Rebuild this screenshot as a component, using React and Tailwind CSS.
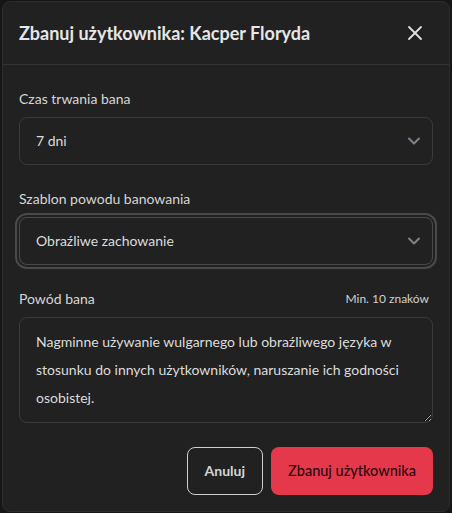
import React from 'react';
import { X, ChevronDown } from 'lucide-react';

const font = { fontFamily: 'Lato, "Noto Sans", sans-serif' };

export default function App() {
    return (
        <div className="min-h-[513px] w-[452px] bg-[#161616] flex items-center justify-center" style={font}>
            <div className="w-[448px] rounded-lg border border-[#2c2c2c] bg-[#212121] text-[#e2e2e2]">
                <div className="flex items-center justify-between border-b border-[#333333] px-4 py-[17px]">
                    <h2 className="text-lg font-bold leading-7 text-[#e6e6e6]">
                        Zbanuj użytkownika: Kacper Floryda
                    </h2>
                    <button className="mr-[6px] text-[#e0e0e0]">
                        <X size={24} strokeWidth={1.8} />
                    </button>
                </div>
                <div className="flex flex-col px-4 pt-6 pb-4">
                    <label className="mb-2 text-sm leading-5 text-[#d6d6d6]">Czas trwania bana</label>
                    <div className="flex h-12 items-center justify-between rounded-lg border border-[#3a3a3a] pl-4 pr-2 text-sm text-[#dcdcdc]">
                        <span>7 dni</span>
                        <ChevronDown size={20} strokeWidth={2.4} className="text-[#7d828c]" />
                    </div>

                    <label className="mt-6 mb-2 text-sm leading-5 text-[#d6d6d6]">Szablon powodu banowania</label>
                    <div className="flex h-12 items-center justify-between rounded-lg border border-[#4a4a4a] pl-4 pr-2 text-sm text-[#dcdcdc] ring-2 ring-[#4a4a4a] ring-offset-2 ring-offset-[#212121]">
                        <span>Obraźliwe zachowanie</span>
                        <ChevronDown size={20} strokeWidth={2.4} className="text-[#7d828c]" />
                    </div>

                    <div className="mt-6 mb-2 flex items-center justify-between">
                        <label className="text-sm leading-5 text-[#d6d6d6]">Powód bana</label>
                        <span className="mr-1 text-xs text-[#d0d0d0]">Min. 10 znaków</span>
                    </div>
                    <textarea
                        rows={3}
                        className="resize-y rounded-lg border border-[#3a3a3a] bg-transparent px-4 py-[10px] text-sm leading-7 text-[#dcdcdc] outline-none"
                        defaultValue="Nagminne używanie wulgarnego lub obraźliwego języka w stosunku do innych użytkowników, naruszanie ich godności osobistej."
                    />

                    <div className="mt-6 flex justify-end gap-2">
                        <button className="h-12 rounded-lg border border-[#cfcfcf] px-[17px] text-sm font-bold text-[#d4d4d4]">
                            Anuluj
                        </button>
                        <button className="h-12 rounded-lg bg-[#e5384a] px-[17px] text-[14.5px] font-medium text-[#2a0b10]">
                            Zbanuj użytkownika
                        </button>
                    </div>
                </div>
            </div>
        </div>
    );
}
